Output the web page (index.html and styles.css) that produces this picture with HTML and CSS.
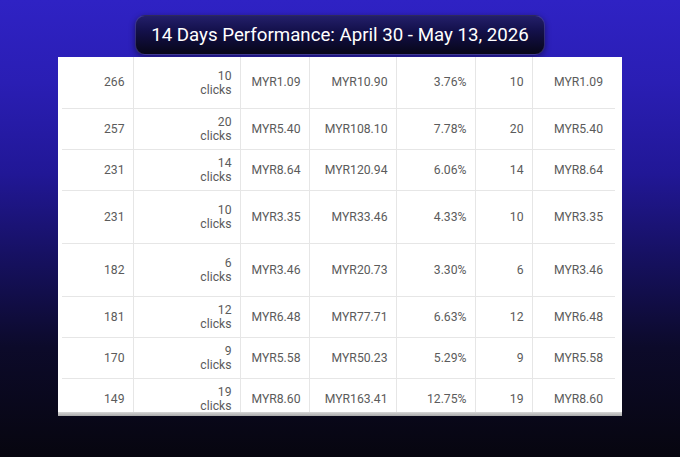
FILE: index.html
```html
<!DOCTYPE html>
<html lang="en">
<head>
<meta charset="utf-8">
<title>14 Days Performance</title>
<link rel="stylesheet" href="styles.css">
</head>
<body>
<main class="stage">
  <h1 class="title">14 Days Performance: April 30 - May 13, 2026</h1>
  <section class="panel">
    <div class="scroller">
      <table class="data">
        <colgroup>
          <col class="c1"><col class="c2"><col class="c3"><col class="c4"><col class="c5"><col class="c6"><col class="c7">
        </colgroup>
        <tbody>
          <tr class="r-51"><td>266</td><td><span class="clk">10<br>clicks</span></td><td>MYR1.09</td><td>MYR10.90</td><td>3.76%</td><td>10</td><td>MYR1.09</td></tr>
          <tr class="r-41"><td>257</td><td><span class="clk">20<br>clicks</span></td><td>MYR5.40</td><td>MYR108.10</td><td>7.78%</td><td>20</td><td>MYR5.40</td></tr>
          <tr class="r-41"><td>231</td><td><span class="clk">14<br>clicks</span></td><td>MYR8.64</td><td>MYR120.94</td><td>6.06%</td><td>14</td><td>MYR8.64</td></tr>
          <tr class="r-53"><td>231</td><td><span class="clk">10<br>clicks</span></td><td>MYR3.35</td><td>MYR33.46</td><td>4.33%</td><td>10</td><td>MYR3.35</td></tr>
          <tr class="r-53"><td>182</td><td><span class="clk">6<br>clicks</span></td><td>MYR3.46</td><td>MYR20.73</td><td>3.30%</td><td>6</td><td>MYR3.46</td></tr>
          <tr class="r-41"><td>181</td><td><span class="clk">12<br>clicks</span></td><td>MYR6.48</td><td>MYR77.71</td><td>6.63%</td><td>12</td><td>MYR6.48</td></tr>
          <tr class="r-41"><td>170</td><td><span class="clk">9<br>clicks</span></td><td>MYR5.58</td><td>MYR50.23</td><td>5.29%</td><td>9</td><td>MYR5.58</td></tr>
          <tr class="r-41"><td>149</td><td><span class="clk">19<br>clicks</span></td><td>MYR8.60</td><td>MYR163.41</td><td>12.75%</td><td>19</td><td>MYR8.60</td></tr>
        </tbody>
      </table>
    </div>
    <div class="hbar"></div>
  </section>
</main>
</body>
</html>
```

FILE: styles.css
```css
* { box-sizing: border-box; }

html, body {
  margin: 0;
  padding: 0;
  height: 100%;
}

body {
  background: linear-gradient(180deg, #2f22c4 0%, #2a1eb4 18%, #211796 38%, #15105c 58%, #0c0a2a 76%, #07060f 100%);
  font-family: Roboto, "Noto Sans", Arial, sans-serif;
  overflow: hidden;
}

.stage {
  display: flex;
  flex-direction: column;
  align-items: center;
  padding-top: 15px;
}

.title {
  margin: 0 0 2px;
  width: 410px;
  height: 40px;
  display: flex;
  align-items: center;
  justify-content: center;
  font-size: 18.7px;
  font-weight: 400;
  color: #ffffff;
  letter-spacing: 0;
  background: linear-gradient(180deg, #231f6a 0%, #13104a 40%, #070618 100%);
  border: 1px solid rgba(120, 110, 220, 0.35);
  border-radius: 10px;
  box-shadow: 0 2px 6px rgba(0, 0, 0, 0.45);
}

.panel {
  width: 564px;
  background: #ffffff;
  display: flex;
  flex-direction: column;
}

.scroller {
  height: 355px;
  overflow: hidden;
  padding: 0 7px 0 4px;
}

.hbar {
  height: 4px;
  background: linear-gradient(180deg, #d6d6d6, #a9a9a9);
}

.data {
  width: 553px;
  table-layout: fixed;
  border-collapse: collapse;
  font-size: 12.2px;
  color: #5b5b5b;
}

.c1 { width: 71px; }
.c2 { width: 107px; }
.c3 { width: 69px; }
.c4 { width: 87px; }
.c5 { width: 79px; }
.c6 { width: 57px; }
.c7 { width: 83px; }

.data td {
  text-align: right;
  vertical-align: middle;
  padding: 0 8px 0 0;
  border-bottom: 1px solid #e6e6e6;
  border-left: 1px solid #e6e6e6;
  white-space: nowrap;
}

.data td:first-child { border-left: none; }
.data td:last-child { padding-right: 12px; }

.clk {
  display: inline-block;
  line-height: 14px;
  padding-top: 1px;
}

.r-51 td { height: 51px; }
.r-53 td { height: 53px; }
.r-41 td { height: 41px; }
```
